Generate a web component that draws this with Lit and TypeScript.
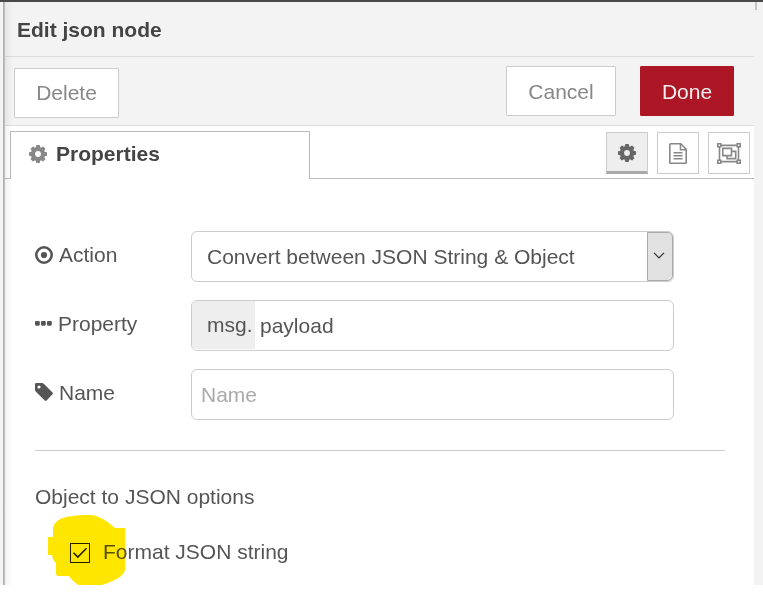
import { LitElement, html, css, svg } from "lit";
import { customElement, property } from "lit/decorators.js";

const TEETH = [0, 45, 90, 135, 180, 225, 270, 315];

const ICONS: Record<string, { w: number; h: number; box: string; art: unknown }> = {
  gear: {
    w: 18, h: 18, box: "0 0 18 18",
    art: svg`<circle cx="9" cy="9" r="5" fill="none" stroke="currentColor" stroke-width="4.200" />
      ${TEETH.map((a) => svg`<path fill="currentColor" transform="rotate(${a} 9 9)" d="M6.600 3.200L7.200.300Q7.250 0 7.600 0H10.400Q10.750 0 10.800.300L11.400 3.200z" />`)}`,
  },
  file: {
    w: 18, h: 21, box: "0 0 18 21",
    art: svg`<g fill="none" stroke="currentColor" stroke-width="1.600">
      <path d="M1.500.8H11.800L17.200 6.200V19.500q0 .7-.7.700h-15q-.7 0-.7-.7v-18q0-.7.700-.7z" stroke-linejoin="round" />
      <path d="M11.500 1v5.700H17M4.500 9.750h9M4.500 12.750h9M4.500 15.750h9" />
    </g>`,
  },
  group: {
    w: 24, h: 21, box: "0 0 24 21",
    art: svg`<g fill="none" stroke="currentColor" stroke-width="1.600">
      <path d="M4 2.400h16M4 18.600h16M2.500 4v13M21.500 4v13" />
      <path d="M.8.8h3v3h-3zM20.200.8h3v3h-3zM.8 17.200h3v3h-3zM20.200 17.200h3v3h-3z" />
      <path d="M5.800 5.400h8.700v7.200h-8.700zM14.500 8.400h4.200v7.200h-8.700v-3" />
    </g>`,
  },
  target: {
    w: 18, h: 18, box: "0 0 18 18",
    art: svg`<circle cx="9" cy="9" r="7.700" fill="none" stroke="currentColor" stroke-width="2.600" /><circle cx="9" cy="9" r="3.100" fill="currentColor" />`,
  },
  dots: {
    w: 17, h: 5, box: "0 0 17 5",
    art: svg`<g fill="currentColor"><rect width="4.800" height="4.700" rx="1.100" /><rect x="6" width="4.800" height="4.700" rx="1.100" /><rect x="12" width="4.800" height="4.700" rx="1.100" /></g>`,
  },
  tag: {
    w: 18, h: 18, box: "0 0 18 18",
    art: svg`<path fill="currentColor" fill-rule="evenodd" d="M1.300 0H7q1 0 1.800.700l8.700 8.700q.9.900 0 1.800l-5.900 6.300q-.9.900-1.800 0L.900 8.700Q0 7.800 0 6.700V1.300Q0 0 1.300 0zM4 2.400a1.600 1.600 0 1 0 0 3.200 1.600 1.600 0 0 0 0-3.200z" />`,
  },
  chevron: {
    w: 12, h: 7, box: "0 0 12 7",
    art: svg`<path d="M1 .8l5 5 5-5" fill="none" stroke="currentColor" stroke-width="1.200" />`,
  },
  check: {
    w: 16, h: 12, box: "0 0 16 12",
    art: svg`<path d="M1.500 5.800l4.300 4.300L14.500 1.200" fill="none" stroke="currentColor" stroke-width="1.600" />`,
  },
};

@customElement("ui-icon")
export class UiIcon extends LitElement {
  @property() name = "gear";
  static styles = css`
    :host { display: inline-flex; flex: none; }
    svg { display: block; }
  `;
  render() {
    const i = ICONS[this.name];
    return html`<svg width=${i.w} height=${i.h} viewBox=${i.box}>${i.art}</svg>`;
  }
}

@customElement("app-root")
export class AppRoot extends LitElement {
  static styles = css`
    * { box-sizing: border-box; }
    :host {
      display: block;
      height: 592px;
      overflow: hidden;
      background: #fff;
      color: #555;
      font: 21px/30px "Liberation Sans", Arial, sans-serif;
    }
    .screen {
      display: flex;
      height: 585px;
      border-top: 2px solid #4b4848;
      background: #f3f3f3;
      overflow: hidden;
    }
    .edge { width: 5px; flex: none; background: linear-gradient(90deg, #f3f3f3 3px, #b0b0b0 3px, #c0c0c0 5px); }
    .tray { width: 749px; background: #fff; display: flex; flex-direction: column; position: relative; }
    .shade { position: absolute; inset: 0 auto 0 0; width: 8px; background: linear-gradient(90deg, rgba(0,0,0,.05), transparent); }
    .notch { width: 2px; height: 8px; margin-left: 1px; background: #c4c4c4; }
    .title {
      height: 55px; flex: none; padding: 13px 12px 0; background: #f3f3f3;
      border-bottom: 1px solid #ddd; font-weight: bold; color: #444;
    }
    .toolbar {
      height: 69px; flex: none; padding: 9px 20px 0 9px; background: #f3f3f3;
      border-bottom: 1px solid #ddd; display: flex; align-items: flex-start;
    }
    .btn {
      height: 50px; border: 1px solid #ccc; border-radius: 1px; background: #fff; color: #888;
      font: inherit; padding: 0; margin: 0;
    }
    .delete { width: 105px; margin: 2px auto 0 0; }
    .cancel { width: 110px; margin-right: 24px; padding-top: 2px; }
    .done { width: 94px; padding-top: 2px; background: #ad1625; border-color: #ad1625; color: #eee; }
    .tabs { height: 53px; flex: none; display: flex; padding-top: 5px; }
    .gap { width: 5px; border-bottom: 1px solid #bbb; }
    .tab {
      width: 300px; border: 1px solid #bbb; border-bottom: 0; display: flex; align-items: center;
      padding: 0 0 4px 18px; gap: 9px; font-weight: bold; color: #444;
    }
    .tab ui-icon { color: #888; }
    .views { flex: 1; display: flex; justify-content: flex-end; gap: 9px; padding: 1px 4px 0 0; border-bottom: 1px solid #bbb; }
    .view { width: 42px; height: 42px; border: 1px solid #ccc; display: flex; align-items: center; justify-content: center; color: #888; }
    .on { background: #eee; border-bottom: 3px solid #aaa; color: #666; padding-top: 1px; }
    .form { padding: 52px 29px 0 30px; display: flex; flex-direction: column; }
    .row { display: flex; height: 51px; margin-bottom: 18px; }
    .label { width: 156px; height: 48px; display: flex; align-items: center; gap: 6px; }
    .dots { margin-bottom: 1px; }
    .tag { margin-bottom: 2px; }
    .field { width: 483px; height: 51px; border: 1px solid #ccc; border-radius: 6px; display: flex; align-items: center; overflow: hidden; }
    .choice { flex: 1; padding-left: 15px; }
    .drop { width: 26px; height: 49px; background: #e1e1e1; border: 1px solid #aaa; border-radius: 0 5px 5px 0; display: flex; align-items: center; justify-content: center; color: #333; padding: 0 2px 2px 0; }
    .type { width: 63px; height: 49px; background: #eee; padding: 9px 0 0 15px; border-bottom: 1px solid #fff; }
    .value { padding: 0 0 0 5px; }
    .hint { padding-left: 9px; color: #aaa; }
    .rule { height: 1px; margin-top: 12px; background: #ccc; }
    .heading { margin-top: 31px; }
    .option { position: relative; margin-top: 25px; padding-left: 35px; display: flex; align-items: center; gap: 13px; }
    .box { width: 20px; height: 20px; border: 1px solid #222; display: flex; align-items: center; justify-content: center; color: #222; margin-top: 2px; }
    .marker { position: absolute; left: 13px; top: -22px; mix-blend-mode: multiply; }
  `;

  render() {
    return html`
      <div class="screen">
        <div class="edge"></div>
        <div class="tray">
          <div class="title">Edit json node</div>
          <div class="toolbar">
            <button class="btn delete">Delete</button>
            <button class="btn cancel">Cancel</button>
            <button class="btn done">Done</button>
          </div>
          <div class="tabs">
            <div class="gap"></div>
            <div class="tab"><ui-icon name="gear"></ui-icon>Properties</div>
            <div class="views">
              <div class="view on"><ui-icon name="gear"></ui-icon></div>
              <div class="view"><ui-icon name="file"></ui-icon></div>
              <div class="view"><ui-icon name="group"></ui-icon></div>
            </div>
          </div>
          <div class="form">
            <div class="row">
              <div class="label"><ui-icon name="target"></ui-icon>Action</div>
              <div class="field">
                <span class="choice">Convert between JSON String &amp; Object</span>
                <span class="drop"><ui-icon name="chevron"></ui-icon></span>
              </div>
            </div>
            <div class="row">
              <div class="label"><ui-icon class="dots" name="dots"></ui-icon>Property</div>
              <div class="field"><span class="type">msg.</span><span class="value">payload</span></div>
            </div>
            <div class="row">
              <div class="label"><ui-icon class="tag" name="tag"></ui-icon>Name</div>
              <div class="field"><span class="hint">Name</span></div>
            </div>
            <div class="rule"></div>
            <div class="heading">Object to JSON options</div>
            <div class="option">
              <span class="box"><ui-icon name="check"></ui-icon></span>
              <span>Format JSON string</span>
              <svg class="marker" width="78" height="71" viewBox="0 0 78 71">
                <path fill="#ffe600" d="M5 22V13Q6 5 18 2Q30-.5 44 0Q55 2 67 13H77V55Q76 62 60 68Q55 70 50 71H32Q24 66 21 61H10Q8 61 8 58V48Q5 46 4 40H0V22Z" />
              </svg>
            </div>
          </div>
          <div class="shade"></div>
        </div>
        <div class="notch"></div>
      </div>
    `;
  }
}
